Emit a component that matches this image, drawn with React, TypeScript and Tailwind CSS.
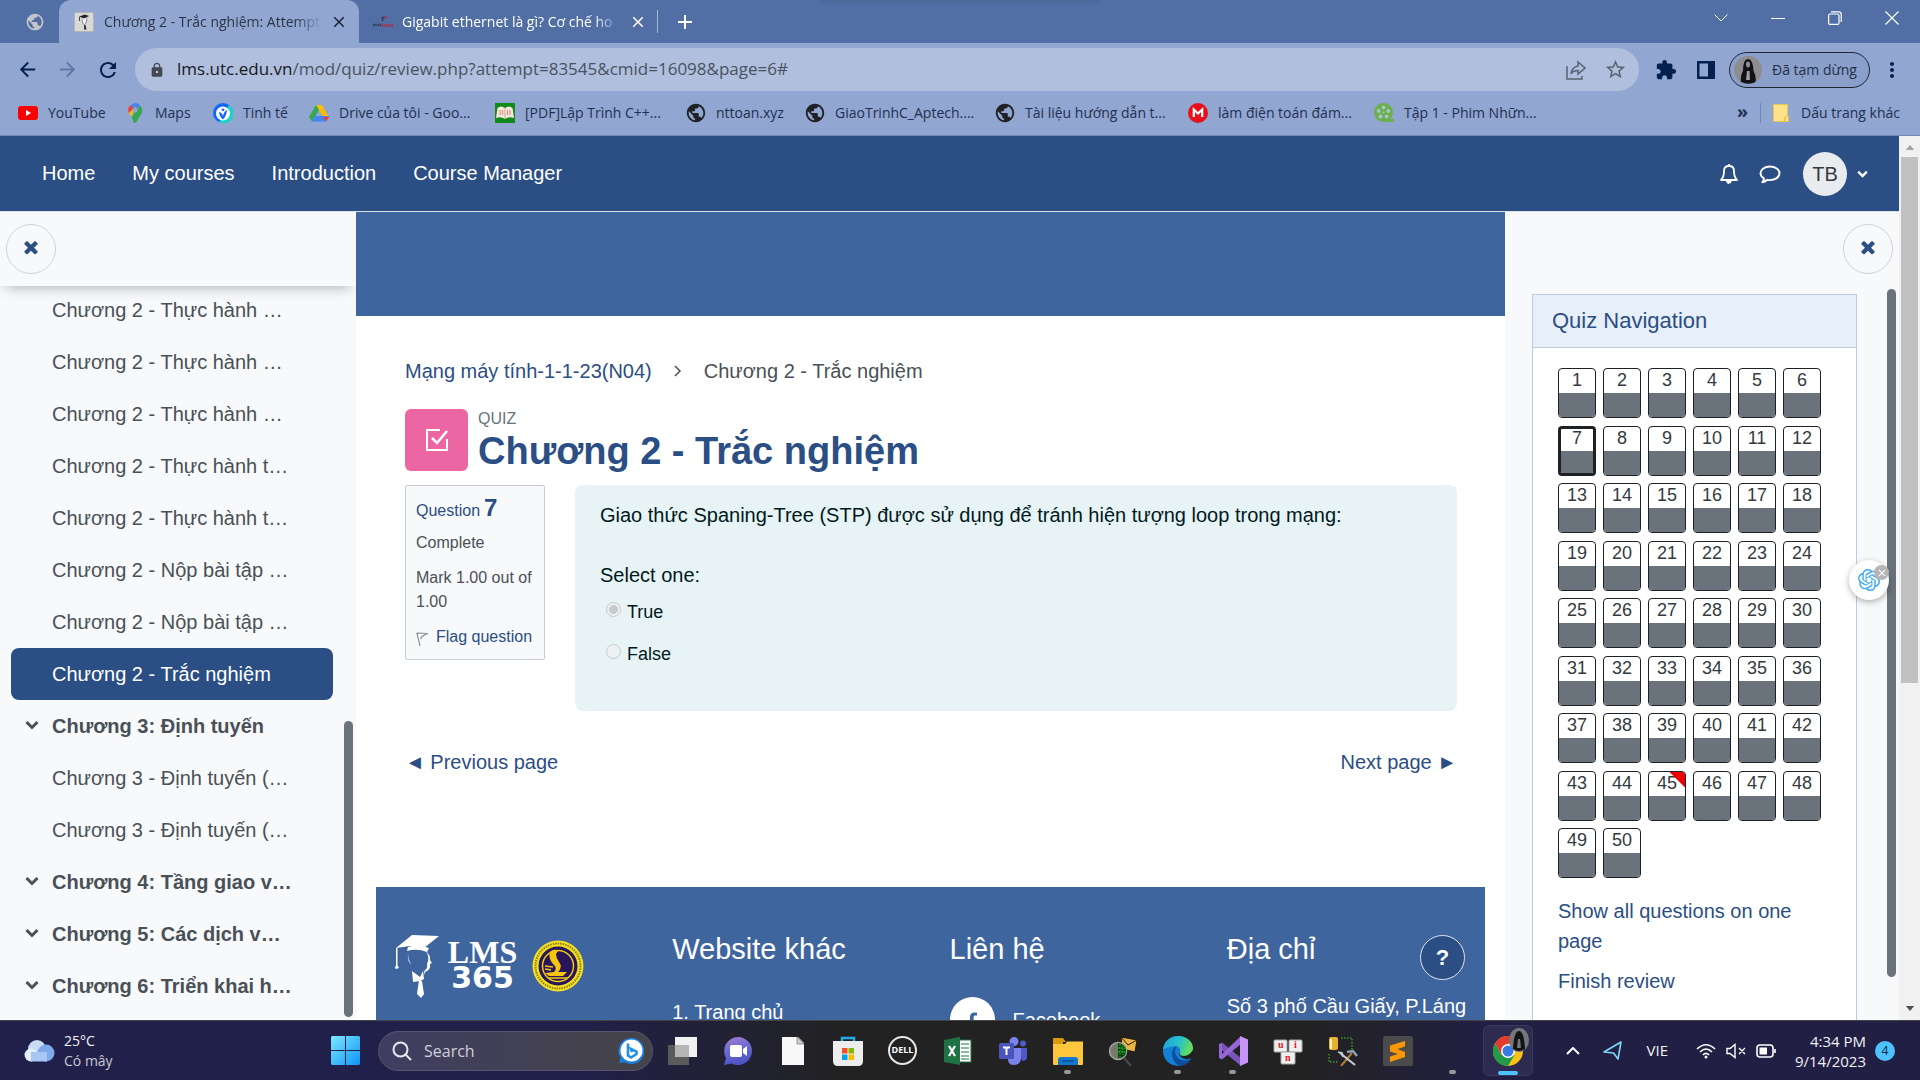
import React from "react";
import {
  MdArrowBack,
  MdArrowForward,
  MdRefresh,
  MdLock,
  MdStarBorder,
  MdExtension,
  MdMoreVert,
  MdPublic,
  MdAdd,
  MdClose,
} from "react-icons/md";
import { SiOpenai } from "react-icons/si";

/* ---------- shared glyphs ---------- */

function Cross({ className }: { className: string }) {
  return (
    <svg viewBox="0 0 1792 1792" className={className} fill="currentColor" aria-hidden="true">
      <path d="M1490 1322q0 40-28 68l-136 136q-28 28-68 28t-68-28l-294-294-294 294q-28 28-68 28t-68-28l-136-136q-28-28-28-68t28-68l294-294-294-294q-28-28-28-68t28-68l136-136q28-28 68-28t68 28l294 294 294-294q28-28 68-28t68 28l136 136q28 28 28 68t-28 68l-294 294 294 294q28 28 28 68z" />
    </svg>
  );
}

function Chevron({ className }: { className: string }) {
  return (
    <svg viewBox="0 0 14 10" className={className} fill="none" stroke="currentColor" strokeWidth="3" aria-hidden="true">
      <path d="M1.5 2 7 7.5 12.500 2" />
    </svg>
  );
}

function GradFavicon() {
  return (
    <svg viewBox="0 0 20 20" className="size-5 shrink-0" aria-hidden="true">
      <rect x="0.500" y="0.500" width="19" height="19" rx="1.500" fill="#d9d9d9" stroke="#b5b5b5" />
      <path d="M5 4.500 11 2.500 15 4 10 6.500z" fill="#222" />
      <path d="M5.500 5v4" stroke="#222" strokeWidth="0.800" />
      <path d="M8 7q0 5 2.500 6 2.500-2 2.500-7" fill="#eee" stroke="#666" strokeWidth="0.700" />
      <path d="M10 13h1.500l1 4.500h-2.500z" fill="#333" />
    </svg>
  );
}

function VietFavicon() {
  return (
    <svg viewBox="0 0 20 20" className="size-5 shrink-0" aria-hidden="true">
      <path d="M9.500 9V5.500h3" fill="none" stroke="#3b3357" strokeWidth="1.500" />
      <path d="M11 5.500h3" stroke="#c3263a" strokeWidth="1.500" />
      <path d="M0 13h9" stroke="#3b3a60" strokeWidth="2.500" strokeDasharray="1.500 0.700" />
      <path d="M9 13.500h11" stroke="#a8324c" strokeWidth="2.500" strokeDasharray="1.800 0.500" />
    </svg>
  );
}

/* ---------- bookmark icons ---------- */

const YoutubeIcon = () => (
  <svg viewBox="0 0 20 20" className="size-5">
    <rect y="3" width="20" height="14" rx="3" fill="#f00" />
    <path d="M8 7v6l5-3z" fill="#fff" />
  </svg>
);
const MapsIcon = () => (
  <svg viewBox="0 0 20 20" className="size-5">
    <path d="M10 0a7 7 0 0 1 5 2L8 10 4.600 7A7 7 0 0 1 10 0z" fill="#4285f4" />
    <path d="M5 2.200 3.400 5A6 6 0 0 0 4 10l5-5z" fill="#ea4335" />
    <path d="M4 10l8-8q-4 5-5 12z" fill="#fbbc04" />
    <path d="M15 2.500q4 4 1 9-3 4-4.500 7.500-1.500 2-3 0L6.500 14z" fill="#34a853" />
    <circle cx="10" cy="7" r="2.500" fill="#91a6d0" />
  </svg>
);
const TinhteIcon = () => (
  <svg viewBox="0 0 20 20" className="size-5">
    <circle cx="10" cy="10" r="10" fill="#1466f5" />
    <path d="M16 2a10 10 0 0 1-10 17.300z" fill="#19d3c5" />
    <circle cx="10" cy="10.500" r="7" fill="#fff" />
    <path d="M6 9q3.500.5 4 4.500.5-5 4-6.500-.5 6-4 9.500-3.500-3-4-7.500z" fill="#1466f5" />
    <circle cx="10" cy="6.800" r="1.400" fill="#1466f5" />
  </svg>
);
const DriveIcon = () => (
  <svg viewBox="0 0 20 20" className="size-5">
    <path d="M7 2h6l7 12h-6z" fill="#fbbc04" />
    <path d="M7 2 0 14l3 4.500L10 7z" fill="#34a853" />
    <path d="M3 18.500 6 13h14l-3 5.500z" fill="#4285f4" />
    <path d="M17 18.500 20 14h-6z" fill="#ea4335" />
  </svg>
);
const PdfIcon = () => (
  <svg viewBox="0 0 20 20" className="size-5">
    <rect width="20" height="20" fill="#118a1c" />
    <path d="M2.500 5q3.500-3 7.500 0 4-3 7.500 0l1.500 10q-5-2-9 1-4-3-9-1z" fill="#f6e7dc" />
    <path d="M5 7v5M7.500 7v5M12.500 7v5M15 7v5" stroke="#e0937f" strokeWidth="1.200" />
    <path d="M10 5v11" stroke="#b99" strokeWidth="0.800" />
  </svg>
);
const GlobeIcon = () => <MdPublic className="size-[22px] -m-px text-[#202124]" />;
const MegaIcon = () => (
  <svg viewBox="0 0 20 20" className="size-5">
    <circle cx="10" cy="10" r="10" fill="#e8101a" />
    <path d="M5.800 14V6.500L10 10.500l4.200-4V14" fill="none" stroke="#fff" strokeWidth="2.200" />
  </svg>
);
const FilmIcon = () => (
  <svg viewBox="0 0 20 20" className="size-5">
    <circle cx="9.500" cy="9.500" r="9.500" fill="#6ab04c" />
    <path d="M10 16h10v3H10z" fill="#6ab04c" />
    <g fill="#a9c3c9">
      <circle cx="9.500" cy="4.500" r="1.900" />
      <circle cx="4.700" cy="8" r="1.900" />
      <circle cx="14.300" cy="8" r="1.900" />
      <circle cx="6.500" cy="13.500" r="1.900" />
      <circle cx="12.500" cy="13.500" r="1.900" />
      <circle cx="9.500" cy="9.500" r="1" />
    </g>
  </svg>
);

const bookmarks: { label: string; icon: React.ReactNode; width: string }[] = [
  { label: "YouTube", icon: <YoutubeIcon />, width: "w-[107px]" },
  { label: "Maps", icon: <MapsIcon />, width: "w-[88px]" },
  { label: "Tinh tế", icon: <TinhteIcon />, width: "w-[96px]" },
  { label: "Drive của tôi - Goo...", icon: <DriveIcon />, width: "w-[186px]" },
  { label: "[PDF]Lập Trình C++...", icon: <PdfIcon />, width: "w-[191px]" },
  { label: "nttoan.xyz", icon: <GlobeIcon />, width: "w-[119px]" },
  { label: "GiaoTrinhC_Aptech....", icon: <GlobeIcon />, width: "w-[190px]" },
  { label: "Tài liệu hướng dẫn t...", icon: <GlobeIcon />, width: "w-[193px]" },
  { label: "làm điện toán đám...", icon: <MegaIcon />, width: "w-[186px]" },
  { label: "Tập 1 - Phim Nhữn...", icon: <FilmIcon />, width: "w-[180px]" },
];

/* ---------- browser chrome ---------- */

function TabStrip() {
  return (
    <div className="relative flex h-[43px] items-stretch bg-[#516fa5] text-white">
      <div className="absolute top-0 left-1/2 h-1 w-[280px] -translate-x-1/2 bg-[#4d6a9d]" />
      <button className="flex w-[59px] items-center justify-end rounded-br-xl pr-3.5" aria-label="Pinned tab">
        <MdPublic className="size-5 text-[#c3c5c8]" />
      </button>
      <div className="flex w-[300px] items-center rounded-t-xl bg-[#91a6d0] pr-[11px] pl-[15px] text-[#2c3547]">
        <GradFavicon />
        <span className="ml-2.5 w-[218px] overflow-hidden whitespace-nowrap [mask-image:linear-gradient(to_right,black_88%,transparent)]">
          Chương 2 - Trắc nghiệm: Attempt
        </span>
        <button aria-label="Close tab" className="ml-auto text-[#1a2233]">
          <MdClose className="size-[18px]" />
        </button>
      </div>
      <div className="flex w-[298px] items-center pr-2.5 pl-3.5">
        <VietFavicon />
        <span className="ml-[9px] w-[218px] overflow-hidden whitespace-nowrap [mask-image:linear-gradient(to_right,black_88%,transparent)]">
          Gigabit ethernet là gì? Cơ chế ho
        </span>
        <button aria-label="Close tab" className="ml-auto">
          <MdClose className="size-[18px]" />
        </button>
      </div>
      <div className="my-2.5 w-px bg-[#a9b8d6]" />
      <button aria-label="New tab" className="ml-[15px]">
        <MdAdd className="size-6" />
      </button>
      <div className="ml-auto flex items-start">
        <button aria-label="Search tabs" className="flex h-9 w-[57px] items-center justify-center">
          <svg viewBox="0 0 14 8" className="h-2 w-3.5" fill="none" stroke="#fff"><path d="m.5.500 6.500 6.500L13.500.500" /></svg>
        </button>
        <button aria-label="Minimize" className="flex h-9 w-[57px] items-center justify-center">
          <svg viewBox="0 0 14 14" className="size-3.5" stroke="#fff"><path d="M0 7.500h14" /></svg>
        </button>
        <button aria-label="Restore" className="flex h-9 w-[57px] items-center justify-center">
          <svg viewBox="0 0 14 14" className="size-3.5" fill="none" stroke="#fff" strokeWidth="1.200">
            <rect x="0.600" y="3" width="10.400" height="10.400" rx="1.500" />
            <path d="M3 .8h7.500a2.500 2.500 0 0 1 2.700 2.700V11" />
          </svg>
        </button>
        <button aria-label="Close window" className="flex h-9 w-[57px] items-center justify-center">
          <svg viewBox="0 0 14 14" className="size-3.5" stroke="#fff" strokeWidth="1.200"><path d="m.5.500 13 13m0-13-13 13" /></svg>
        </button>
      </div>
    </div>
  );
}

function Toolbar() {
  return (
    <div className="flex h-[53px] items-center bg-[#91a6d0] text-[#03204e]">
      <button aria-label="Back" className="ml-4"><MdArrowBack className="size-[23px]" /></button>
      <button aria-label="Forward" className="ml-[17px] text-[#5f78a8]"><MdArrowForward className="size-[23px]" /></button>
      <button aria-label="Reload" className="ml-[17px]"><MdRefresh className="size-6" /></button>
      <div className="ml-[15px] flex h-[43px] flex-1 items-center rounded-full bg-[#afbfdd] pr-3 pl-3.5">
        <MdLock className="size-4 shrink-0 text-[#45484f]" />
        <div className="ml-3 flex-1 text-[17px] whitespace-nowrap text-[#4a5261]">
          <span className="text-[#17191d]">lms.utc.edu.vn</span>/mod/quiz/review.php?attempt=83545&amp;cmid=16098&amp;page=6#
        </div>
        <button aria-label="Share" className="text-[#5a6372]">
          <svg viewBox="0 0 20 20" className="size-5" fill="none" stroke="currentColor" strokeWidth="1.500">
            <path d="M1 6v13h15v-3" />
            <path d="M12 2l7 6-7 6v-3.500q-5 0-7 3.500 1-7 7-8z" />
          </svg>
        </button>
        <button aria-label="Bookmark this page" className="ml-[18px] text-[#5a6372]"><MdStarBorder className="size-[23px]" /></button>
      </div>
      <button aria-label="Extensions" className="ml-4"><MdExtension className="size-[22px]" /></button>
      <button aria-label="Side panel" className="ml-5">
        <svg viewBox="0 0 18 18" className="size-[18px]"><path d="M0 0h18v18H0zm2.500 2.500v13H11v-13z" fill="currentColor" fillRule="evenodd" /></svg>
      </button>
      <button className="ml-3.5 flex h-9 w-[141px] items-center rounded-full border border-[#1d2635] bg-[#8a9fc9] pl-1 text-sm text-[#22304a]">
        <svg viewBox="0 0 28 28" className="size-7 shrink-0">
          <circle cx="14" cy="14" r="14" fill="#8d8d90" />
          <path d="M7 26q-1-6 2-11 0-12 5-12t5.500 12q3 5 2 11-7 3.500-14.500 0z" fill="#121214" />
          <ellipse cx="14" cy="8.500" rx="2" ry="3" fill="#8f8f92" />
          <path d="M13 15h2.500l.5 9h-4z" fill="#9c9ca0" />
        </svg>
        <span className="ml-2.5 whitespace-nowrap">Đã tạm dừng</span>
      </button>
      <button aria-label="Menu" className="mr-4 ml-2.5"><MdMoreVert className="size-6" /></button>
    </div>
  );
}

function BookmarkBar() {
  return (
    <div className="flex h-10 items-center border-b border-[#6f88b8] bg-[#91a6d0] pb-1.5 pl-[18px] text-[#1f3052]">
      {bookmarks.map((b) => (
        <a key={b.label} href="#" className={`flex shrink-0 items-center gap-2.5 ${b.width}`}>
          <span className="shrink-0">{b.icon}</span>
          <span className="whitespace-nowrap">{b.label}</span>
        </a>
      ))}
      <button aria-label="More bookmarks" className="ml-auto pb-1 text-lg leading-none font-bold">»</button>
      <div className="mx-3 h-5 w-px bg-[#6f88b8]" />
      <a href="#" className="flex items-center gap-3 pr-5 whitespace-nowrap">
        <svg viewBox="0 0 16 20" className="h-5 w-4">
          <path d="M.5 1.500h14v12h1v5H.500z" fill="#ffe28a" stroke="#e9c455" />
          <path d="M12 18.500v-3.500q0-1.500 1.500-1.500" fill="none" stroke="#dcae2b" />
        </svg>
        Dấu trang khác
      </a>
    </div>
  );
}

/* ---------- page ---------- */

function SiteHeader() {
  return (
    <header className="flex h-[76px] shrink-0 items-center border-b border-[#dee2e6] bg-[#2b4e84] pr-[31px] pl-[42px] text-xl text-white">
      <nav className="flex gap-[37px] pb-0.5">
        <a href="#">Home</a>
        <a href="#">My courses</a>
        <a href="#">Introduction</a>
        <a href="#">Course Manager</a>
      </nav>
      <div className="ml-auto flex items-center">
        <button aria-label="Notifications">
          <svg viewBox="0 0 20 22" className="h-[22px] w-5" fill="none" stroke="currentColor" strokeWidth="1.800">
            <path d="M2 17q3-3 3-9 0-5 5-5t5 5q0 6 3 9z" strokeLinejoin="round" />
            <path d="M10 1v2" />
            <path d="M7.500 18a2.500 2.500 0 0 0 5 0z" fill="currentColor" stroke="none" />
            <path d="M8 18q0 2 2 2.500" strokeWidth="1.500" />
          </svg>
        </button>
        <button aria-label="Messages" className="ml-5">
          <svg viewBox="0 0 22 20" className="h-5 w-[22px]" fill="none" stroke="currentColor" strokeWidth="1.900">
            <path d="M11 2.500c5.300 0 9.500 3 9.500 6.800s-4.200 6.800-9.500 6.800q-1.500 0-2.700-.3-2.300 2.200-5 2.400 1.600-1.600 1.700-3.800C2.900 13.200 1.500 11.400 1.500 9.300c0-3.800 4.200-6.800 9.500-6.800z" strokeLinejoin="round" />
          </svg>
        </button>
        <button className="ml-[22px] flex items-center gap-2.5">
          <span className="flex size-11 items-center justify-center rounded-full bg-[#e9ecef] text-[#343a40]">TB</span>
          <Chevron className="h-2 w-[11px]" />
        </button>
      </div>
    </header>
  );
}

const courseIndex: { label: string; section?: boolean; active?: boolean }[] = [
  { label: "Chương 2 - Thực hành …" },
  { label: "Chương 2 - Thực hành …" },
  { label: "Chương 2 - Thực hành …" },
  { label: "Chương 2 - Thực hành t…" },
  { label: "Chương 2 - Thực hành t…" },
  { label: "Chương 2 - Nộp bài tập …" },
  { label: "Chương 2 - Nộp bài tập …" },
  { label: "Chương 2 - Trắc nghiệm", active: true },
  { label: "Chương 3: Định tuyến", section: true },
  { label: "Chương 3 - Định tuyến (…" },
  { label: "Chương 3 - Định tuyến (…" },
  { label: "Chương 4: Tầng giao v…", section: true },
  { label: "Chương 5: Các dịch v…", section: true },
  { label: "Chương 6: Triển khai h…", section: true },
];

function RoundClose({ label }: { label: string }) {
  return (
    <button
      aria-label={label}
      className="flex size-[50px] items-center justify-center rounded-full border border-[#cfd3d8] pb-1 text-[#2b4e84]"
    >
      <Cross className="size-5" />
    </button>
  );
}

function CourseDrawer() {
  return (
    <aside className="relative flex w-[356px] shrink-0 flex-col overflow-hidden bg-[#f8f9fb]">
      <div className="relative z-10 h-[74px] shrink-0 bg-[#f8f9fb] pt-3 pl-1.5 shadow-[0_8px_12px_-6px_rgba(0,0,0,0.28)]">
        <RoundClose label="Close course index" />
      </div>
      <ul className="-mt-0.5 text-xl text-[#495057]">
        {courseIndex.map((item, i) => (
          <li
            key={i}
            className={
              item.active
                ? "mr-[23px] ml-[11px] flex h-[52px] items-center rounded-lg bg-[#2b4e84] text-white"
                : "mr-[23px] ml-[11px] flex h-[52px] items-center"
            }
          >
            <span className="flex w-[41px] justify-center pb-0.5">{item.section && <Chevron className="h-2.5 w-3.5" />}</span>
            <a href="#" className={item.section ? "font-bold whitespace-nowrap" : "whitespace-nowrap"}>
              {item.label}
            </a>
          </li>
        ))}
      </ul>
      <div className="absolute right-[3px] bottom-[3px] h-[296px] w-[9px] rounded-full bg-[#6a737b]" />
    </aside>
  );
}

function QuestionInfo() {
  return (
    <div className="h-[175px] w-[140px] shrink-0 rounded-xs border border-[#c5ccd5] bg-[#f8f9fb] px-2.5 pt-2.5 text-base leading-6 text-[#495057]">
      <h3 className="flex h-7 items-baseline gap-1 text-[#2b4e84]">
        Question <span className="text-2xl leading-6 font-bold">7</span>
      </h3>
      <div className="mt-[7px]">Complete</div>
      <div className="mt-[11px]">Mark 1.00 out of 1.00</div>
      <a href="#" className="mt-[11px] flex items-center gap-2 whitespace-nowrap text-[#2b4e84]">
        <svg viewBox="0 0 12 14" className="mt-1 h-3.5 w-3" fill="none" stroke="#868e96" strokeWidth="1.200">
          <path d="M.8.800 4 14M.8 1l10.500.5L6 4.500 4.500 7" />
        </svg>
        Flag question
      </a>
    </div>
  );
}

function Answer({ id, label, checked }: { id: string; label: string; checked?: boolean }) {
  return (
    <div className="flex h-[27px] items-start pl-1.5">
      <input
        id={id}
        type="radio"
        name="answer"
        disabled
        defaultChecked={checked}
        className="mt-[3px] size-[15px] appearance-none rounded-full border-[1px] border-[#c6cbcc] bg-[#eef1f2] checked:bg-[radial-gradient(circle,#c6cbcc_0_4px,#eef1f2_5px)]"
      />
      <label htmlFor={id} className="ml-1.5 text-lg leading-[27px]">{label}</label>
    </div>
  );
}

function LmsLogo() {
  return (
    <a href="#" className="flex items-start" aria-label="LMS 365">
      <svg viewBox="0 0 44 64" className="h-16 w-11 shrink-0" fill="#fff">
        <path d="M1 14 17 1l27 1-15 12-14-2z" />
        <path d="M13 13q10-3 21 1l-2 4Q22 14 12 17z" />
        <path d="M1 14h1.500v17L4 34l-3 1-1-1 1-3z" />
        <path d="M31 17q5 5 4 9l2 3-2 1q1 6-5 8l-1 3q-1-3 1-5 3-2 2-6l1-3q1-5-2-10z" />
        <path d="M13 19q0 8 4 12-5-3-4-12z" />
        <path d="m17 37 8 6 3-6 1 8-4 2-7 1z" />
        <path d="m24 46 3 1 2 13-3 4-4-4z" />
      </svg>
      <div className="ml-2 flex w-[71px] flex-col items-center text-white">
        <span className="font-['Liberation_Serif',serif] text-[32px] leading-[36px] font-bold">LMS</span>
        <span className="-mt-1 font-['DejaVu_Sans',sans-serif] text-[30px] leading-[24px] font-bold">365</span>
      </div>
      <svg viewBox="0 0 52 52" className="mt-1.5 ml-3.5 size-[52px] shrink-0">
        <circle cx="26" cy="26" r="25.500" fill="#f7e11e" />
        <circle cx="26" cy="26" r="22.500" fill="none" stroke="#8a7d1c" strokeWidth="2" strokeDasharray="1.500 1" />
        <circle cx="26" cy="26" r="19.500" fill="#28165c" />
        <circle cx="26" cy="26" r="15.500" fill="none" stroke="#f2c90d" strokeWidth="1.500" />
        <path d="M18 12q4-4 8-1l-2 3q0 4 3 8 4 5-1 10h9l-4 4H17l-4-3 9-1q4-4-1-8-5-6-3-12z" fill="#f5c60a" />
        <path d="M13 26l8 1M13 29l6 1M16 38h20" stroke="#f5c60a" strokeWidth="1.500" />
      </svg>
    </a>
  );
}

function SiteFooter() {
  return (
    <footer className="mx-5 grid h-[520px] shrink-0 grid-cols-4 bg-[#3f659f] text-xl leading-[30px] text-white">
      <div className="px-[19px] pt-[47px]">
        <LmsLogo />
      </div>
      <div className="px-[19px] pt-[45px]">
        <h3 className="text-[29px] leading-[34px]">Website khác</h3>
        <a href="#" className="mt-[31px] block">1. Trang chủ</a>
      </div>
      <div className="px-[19px] pt-[45px]">
        <h3 className="text-[29px] leading-[34px]">Liên hệ</h3>
        <a href="#" className="mt-[31px] flex items-center gap-[18px]">
          <span className="flex size-[45px] items-center justify-center rounded-full bg-white text-[#3f659f]">
            <svg viewBox="0 0 12 24" className="mt-1 h-5 w-3" fill="currentColor">
              <path d="M3.500 24V13.500H0V9.500h3.500V6C3.500 2.500 5.500.500 9 .500q2 0 3 .3v3.500h-2c-1.500 0-2 .8-2 2v3.200h4l-.6 4H8V24z" />
            </svg>
          </span>
          Facebook
        </a>
      </div>
      <div className="px-[19px] pt-[45px]">
        <h3 className="text-[29px] leading-[34px]">Địa chỉ</h3>
        <p className="mt-[25px] whitespace-nowrap">Số 3 phố Cầu Giấy, P.Láng</p>
      </div>
    </footer>
  );
}

function MainColumn() {
  return (
    <main className="relative flex min-w-0 flex-1 flex-col overflow-hidden bg-white">
      <div className="h-[104px] shrink-0 bg-[#3f659f]" />
      <div className="shrink-0 px-12 pt-10 pl-[49px]">
        <nav aria-label="Breadcrumb" className="flex items-center text-xl leading-[30px] text-[#495057]">
          <a href="#" className="text-[#2b4e84]">Mạng máy tính-1-1-23(N04)</a>
          <svg viewBox="0 0 8 12" className="mx-[22px] h-3 w-2" fill="none" stroke="#495057" strokeWidth="1.500"><path d="m1 1 5 5-5 5" /></svg>
          <span>Chương 2 - Trắc nghiệm</span>
        </nav>
        <div className="mt-[23px] flex h-[62px]">
          <div className="flex w-[63px] items-center justify-center rounded-md bg-[#eb66a2]">
            <svg viewBox="0 0 24 24" className="size-6" fill="none" stroke="#fff" strokeWidth="2">
              <path d="M15 2H2v20h20V11" />
              <path d="m7 10 5 5L22 3" strokeWidth="2.500" />
            </svg>
          </div>
          <div className="ml-2.5">
            <div className="text-base leading-5 text-[#6a737b]">QUIZ</div>
            <h1 className="text-[38px] leading-[44px] font-bold text-[#2b4e84]">Chương 2 - Trắc nghiệm</h1>
          </div>
        </div>
        <div className="mt-3.5 flex items-start">
          <QuestionInfo />
          <form className="ml-[30px] flex-1 rounded-lg bg-[#e7f3f5] px-[25px] pt-[15px] pb-[43px] text-xl leading-[30px] text-[#001a1e]">
            <p>Giao thức Spaning-Tree (STP) được sử dụng để tránh hiện tượng loop trong mạng:</p>
            <p className="mt-[30px] mb-[9px]">Select one:</p>
            <div className="flex flex-col gap-[15px]">
              <Answer id="answer-true" label="True" checked />
              <Answer id="answer-false" label="False" />
            </div>
          </form>
        </div>
        <div className="mt-9 flex justify-between text-xl leading-[30px] text-[#2b4e84]">
          <a href="#">◄ Previous page</a>
          <a href="#">Next page ►</a>
        </div>
      </div>
      <div className="h-[110px] shrink-0" />
      <SiteFooter />
      <button
        aria-label="Help"
        className="absolute right-10 bottom-10 flex size-[45px] items-center justify-center rounded-full border border-[#dfe5ee] bg-[#2b4e84] text-[22px] font-bold text-white"
      >
        ?
      </button>
    </main>
  );
}

const questionNumbers = Array.from({ length: 50 }, (_, i) => i + 1);

function QuizDrawer() {
  return (
    <aside className="relative w-[394px] shrink-0 overflow-hidden bg-[#f8f9fb]">
      <div className="flex justify-end pt-3 pr-1.5">
        <RoundClose label="Close block drawer" />
      </div>
      <section className="mt-5 mr-[42px] ml-[27px] h-[900px] border border-[#bccbe0] bg-white">
        <h2 className="h-[53px] border-b border-[#bccbe0] bg-[#e7effb] pl-[19px] text-[22px] leading-[52px] text-[#2b4e84]">
          Quiz Navigation
        </h2>
        <div className="px-[25px] pt-5">
          <div className="grid h-[510px] w-[263px] grid-cols-[repeat(6,38px)] content-between justify-between text-lg text-[#343a40]">
            {questionNumbers.map((n) => (
              <a
                key={n}
                href="#"
                className={
                  n === 7
                    ? "relative flex h-[50px] flex-col overflow-hidden rounded border-[3px] border-[#1d2125] bg-white text-center leading-[19px]"
                    : "relative flex h-[50px] flex-col overflow-hidden rounded border border-[#1d2125] bg-white text-center leading-[23px]"
                }
              >
                <span className="h-1/2">{n}</span>
                <span className="h-1/2 bg-[#6a737b]" />
                {n === 45 && (
                  <span className="absolute top-0 right-0 size-4 bg-[#f00000] [clip-path:polygon(0_0,100%_0,100%_100%)]" />
                )}
              </a>
            ))}
          </div>
          <div className="mt-[18px] text-xl leading-[30px] text-[#2b4e84]">
            <a href="#" className="block">Show all questions on one page</a>
            <a href="#" className="mt-2.5 block">Finish review</a>
          </div>
        </div>
      </section>
      <div className="absolute top-[77px] right-[3px] h-[688px] w-[9px] rounded-full bg-[#6a737b]" />
      <button
        aria-label="Assistant"
        className="absolute top-[348px] right-2.5 flex size-10 items-center justify-center rounded-full bg-white text-[#3fa9f5] shadow-[0_2px_6px_rgba(0,0,0,0.3)]"
      >
        <SiOpenai className="size-[22px]" />
        <span className="absolute top-[5px] right-0 flex size-[15px] items-center justify-center rounded-full bg-[#b5b5b5] text-white">
          <MdClose className="size-3" />
        </span>
      </button>
    </aside>
  );
}

function PageScrollbar() {
  return (
    <div className="flex w-[21px] shrink-0 flex-col items-center bg-[#f1f1f1]">
      <svg viewBox="0 0 10 6" className="mt-[9px] h-[5px] w-2.5" fill="#a3a3a3"><path d="M5 0l5 6H0z" /></svg>
      <div className="mt-[7px] h-[526px] w-[17px] bg-[#c1c1c1]" />
      <svg viewBox="0 0 10 6" className="mt-auto mb-[9px] h-[5px] w-2.5" fill="#505050"><path d="M0 0h10L5 6z" /></svg>
    </div>
  );
}

/* ---------- taskbar ---------- */

const iconClass = "size-[30px]";

const taskIcons: { name: string; art: React.ReactNode; running?: boolean }[] = [
  {
    name: "Task view",
    art: (
      <svg viewBox="0 0 30 30" className={iconClass}>
        <rect x="7" y="1" width="22" height="20" fill="#f1f1f1" />
        <rect x="0" y="9" width="21" height="20" fill="#5b5b5b" />
        <rect x="7" y="9" width="14" height="12" fill="#b5b5b5" />
      </svg>
    ),
  },
  {
    name: "Chat",
    art: (
      <svg viewBox="0 0 30 30" className={iconClass}>
        <defs>
          <linearGradient id="chat" x1="0" y1="0" x2="0.300" y2="1"><stop stopColor="#a77fd0" /><stop offset="0.500" stopColor="#6d6bd2" /><stop offset="1" stopColor="#4d54c6" /></linearGradient>
        </defs>
        <path d="M15 1a14 14 0 1 1-6.500 26.400L1 29l2-7A14 14 0 0 1 15 1z" fill="url(#chat)" />
        <rect x="7" y="9" width="12" height="12" rx="2" fill="#fff" />
        <path d="m20 13 4-3v10l-4-3z" fill="#fff" />
      </svg>
    ),
  },
  {
    name: "Document",
    art: (
      <svg viewBox="0 0 30 30" className={iconClass}>
        <path d="M4 1h16l6 6v22H4z" fill="#f8f8f8" />
        <path d="M19 1v7h7z" fill="#d0d0d0" stroke="#777" strokeWidth="0.700" />
      </svg>
    ),
  },
  {
    name: "Microsoft Store",
    art: (
      <svg viewBox="0 0 30 30" className={iconClass}>
        <path d="M9 8V2h12v6" fill="none" stroke="#29a9e8" strokeWidth="2.500" />
        <path d="M0 5h30v20q0 5-5 5H5q-5 0-5-5z" fill="#ededed" />
        <path d="M9 12h5.500v5.500H9z" fill="#f25022" /><path d="M15.500 12H21v5.500h-5.500z" fill="#7fba00" />
        <path d="M9 18.500h5.500V24H9z" fill="#00a4ef" /><path d="M15.500 18.500H21V24h-5.500z" fill="#ffb900" />
      </svg>
    ),
  },
  {
    name: "Dell",
    art: (
      <span className="flex size-[29px] items-center justify-center rounded-full border-2 border-[#e6e6e6] text-[9px] font-bold text-white">
        DELL
      </span>
    ),
  },
  {
    name: "Excel",
    art: (
      <svg viewBox="0 0 30 30" className={iconClass}>
        <rect x="14" y="4" width="14" height="22" fill="#fff" stroke="#217346" />
        <path d="M18 8h8M18 12h8M18 16h8M18 20h8M18 23h8" stroke="#217346" strokeWidth="1.200" />
        <path d="m1 4 16-3v28L1 26z" fill="#1f7244" />
        <path d="m6 10 6 10M12 10 6 20" stroke="#fff" strokeWidth="2.200" />
      </svg>
    ),
  },
  {
    name: "Teams",
    art: (
      <svg viewBox="0 0 30 30" className={iconClass}>
        <circle cx="25" cy="7.500" r="3" fill="#5059c9" /><circle cx="16" cy="5.500" r="4.500" fill="#7b83eb" />
        <path d="M21 12h8v9q0 4-5 4z" fill="#5059c9" />
        <path d="M10 12h13v11q-1 6-7 6t-6-6z" fill="#7b83eb" />
        <rect x="1" y="7" width="15" height="16" rx="1.500" fill="#4b53bc" />
        <path d="M5 11.500h7M8.500 11v8" stroke="#fff" strokeWidth="2" />
      </svg>
    ),
  },
  {
    name: "File Explorer",
    running: true,
    art: (
      <svg viewBox="0 0 30 30" className={iconClass}>
        <path d="M0 3q0-1 1-1h9l3 4h-3v6H0z" fill="#dc9a08" />
        <path d="M0 8h12l2-2.500h16V28q0 1-1 1H1q-1 0-1-1z" fill="#fdc73c" />
        <path d="M5 29v-5q0-3 3-3h14q3 0 3 3v5z" fill="#1377d1" /><path d="M9 25h12" stroke="#0b4c93" strokeWidth="1.500" />
      </svg>
    ),
  },
  {
    name: "Mail search",
    art: (
      <svg viewBox="0 0 30 30" className={iconClass}>
        <path d="m13 1 16 3-2 12-13-3z" fill="#e9b544" stroke="#241b08" /><path d="m13 1 7 8 9-5" fill="none" stroke="#241b08" />
        <circle cx="10" cy="15" r="8.500" fill="#77796f" stroke="#a3a3a0" strokeWidth="1.500" />
        <path d="M10 7q8 1 8 8t-8 7z" fill="#073d0c" /><path d="M12 8v13M15 9v10M10 12h8M10 16h8" stroke="#16d42b" strokeWidth="0.900" strokeDasharray="2 1" />
        <path d="m16 22 7 8" stroke="#4c4c4c" strokeWidth="2" />
      </svg>
    ),
  },
  {
    name: "Edge",
    running: true,
    art: (
      <svg viewBox="0 0 30 30" className={iconClass}>
        <defs>
          <linearGradient id="edge" x1="0" y1="0" x2="1" y2="0.300"><stop stopColor="#1d9fe0" /><stop offset="0.600" stopColor="#2bc3c8" /><stop offset="1" stopColor="#62dc5c" /></linearGradient>
        </defs>
        <circle cx="15" cy="15" r="15" fill="#1380d3" />
        <path d="M0 13C1 5 8 0 15 0c9 0 15 6 15 12 0 5-4 8-9 8-4 0-5-2-4-4 1-3-1-6-5-6-6 0-12 4-12 3z" fill="url(#edge)" />
        <path d="M9 17q0-5 5-7-4 6 0 11 5 6 14 2-4 7-12 7-7-4-7-13z" fill="#0c4f9c" />
        <path d="M17 16q-2 4 4 4 5 0 9-6l.5 7-3 1.500q-6 2-10-2-3-3-.5-4.500z" fill="#212123" />
      </svg>
    ),
  },
  {
    name: "Visual Studio",
    running: true,
    art: (
      <svg viewBox="0 0 30 30" className={iconClass}>
        <path d="m1 8 3-1.500L23 22v8L1 12z" fill="#7a55b8" /><path d="M1 8v14l3 1.500L23 8V0L4 18V8z" fill="#9566d6" />
        <path d="m22 0 8 3.500v23L22 30z" fill="#c795f7" />
      </svg>
    ),
  },
  {
    name: "UniKey",
    art: (
      <svg viewBox="0 0 30 30" className={iconClass}>
        <g fill="#eee" stroke="#a9a9a9"><rect x="1" y="4" width="13" height="12" rx="1" /><rect x="16" y="4" width="13" height="12" rx="1" /><rect x="8" y="16" width="14" height="12" rx="1" /></g>
        <g fill="#e0202a" fontFamily="Liberation Serif" fontWeight="bold" fontSize="10"><text x="5" y="12">u</text><text x="21" y="12">i</text><text x="12" y="25">n</text></g>
      </svg>
    ),
  },
  {
    name: "SQL tools",
    art: (
      <svg viewBox="0 0 30 30" className={iconClass}>
        <rect x="1" y="1" width="9" height="13" rx="2" fill="#e4b130" /><path d="M3 3v10" stroke="#fff2b0" strokeWidth="2" />
        <path d="M13 2h11v12M1 18v8h10" fill="none" stroke="#3b9b2b" strokeWidth="1.500" strokeDasharray="1.500 1.500" />
        <path d="m13 30 11-13" stroke="#b97d2b" strokeWidth="2" /><path d="m12 17 15 12" stroke="#c4cbd6" strokeWidth="2.200" />
        <path d="m19 16 6-1 4 5" fill="none" stroke="#8fa0b6" strokeWidth="2.500" />
        <path d="m10 16 4 1 1 4" fill="none" stroke="#c4cbd6" strokeWidth="1.800" />
      </svg>
    ),
  },
  {
    name: "Sublime Text",
    art: (
      <svg viewBox="0 0 30 30" className={iconClass}>
        <rect width="30" height="30" rx="2" fill="#4b4b4b" />
        <path d="M7 9.500 22 5v5.500l-7.500 2.500 7.500 3V21L7 26v-5.500l8-2.500-8-2.500z" fill="#ff9800" />
      </svg>
    ),
  },
  { name: "Running app", running: true, art: <span className={iconClass} /> },
];

function Taskbar() {
  return (
    <footer className="flex h-[60px] shrink-0 items-center border-t border-[#444449] bg-[linear-gradient(to_right,#21204a_0%,#21204a_30%,#222222_44%,#222222_68%,#221f45_78%,#221f45_100%)] text-[#f2f2f5]">
      <button className="flex w-[319px] items-center pl-6 text-left leading-5">
        <svg viewBox="0 0 32 22" className="h-[22px] w-8 shrink-0">
          <circle cx="13" cy="9" r="9" fill="#c9dcf7" /><circle cx="22" cy="13" r="8.500" fill="#7ea9ea" /><circle cx="7" cy="15" r="6.500" fill="#e4eefc" />
          <path d="M7 12h16v9.500H7z" fill="#a9c7f3" />
        </svg>
        <span className="ml-2">
          <span className="block">25°C</span>
          <span className="block text-[#c9c9d3]">Có mây</span>
        </span>
      </button>
      <button aria-label="Start" className="ml-3">
        <svg viewBox="0 0 29 29" className="size-[29px]">
          <defs>
            <linearGradient id="win" x1="0" y1="0" x2="1" y2="1"><stop stopColor="#7ce8ff" /><stop offset="1" stopColor="#0f93f7" /></linearGradient>
          </defs>
          <path d="M1 0h13v14H0V1zM15 0h13l1 1v13H15zM0 15h14v14H1l-1-1zM15 15h14v13l-1 1H15z" fill="url(#win)" />
        </svg>
      </button>
      <div className="ml-[18px] flex h-10 w-[275px] items-center rounded-full border border-[#56546f] bg-[linear-gradient(to_right,#403d62,#454448)] pr-2 pl-[13px]">
        <svg viewBox="0 0 20 20" className="size-5 shrink-0" fill="none" stroke="#e8e8ee" strokeWidth="2"><circle cx="8.500" cy="8.500" r="7" /><path d="m13.500 13.500 5.500 5.500" /></svg>
        <input aria-label="Search" placeholder="Search" className="ml-3 w-full min-w-0 bg-transparent text-base placeholder:text-[#cfcfd8]" />
        <svg viewBox="0 0 26 26" className="size-[26px] shrink-0">
          <path d="M13 0a13 13 0 1 1-6 24.300L1 25l1.500-5A13 13 0 0 1 13 0z" fill="#1b7fe0" />
          <circle cx="13.500" cy="12.500" r="11" fill="#fff" />
          <path d="M10 5.500v12l3 2 5.500-3.500v-2.500L13 11l1 3" fill="none" stroke="#2190e6" strokeWidth="2.600" />
        </svg>
      </div>
      <div className="ml-0.5 flex h-full">
        {taskIcons.map((t) => (
          <button key={t.name} aria-label={t.name} className="relative flex w-[55px] items-center justify-center">
            {t.art}
            {t.running && <span className="absolute bottom-1.5 left-6 h-1 w-[7px] rounded-full bg-[#98989c]" />}
          </button>
        ))}
        <button aria-label="Chrome" className="relative my-1 ml-[3px] flex w-[50px] items-center justify-center rounded-md border border-[#3b385d] bg-[#2e2b50]">
          <svg viewBox="0 0 30 30" className={iconClass}>
            <circle cx="15" cy="15" r="15" fill="#fbc116" />
            <path d="M2 7.500A15 15 0 0 1 28 7.500H15L8.500 19z" fill="#e33b2e" />
            <path d="M2 7.500A15 15 0 0 0 15 30l6.500-11H8.500z" fill="#229a4a" />
            <circle cx="15" cy="15" r="7" fill="#fff" /><circle cx="15" cy="15" r="5.500" fill="#3b79e7" />
          </svg>
          <svg viewBox="0 0 20 24" className="absolute top-0.5 right-[3px] h-6 w-5">
            <ellipse cx="10" cy="12" rx="10" ry="12" fill="#77777a" /><path d="M4 21Q5 3 10 3t6 18q-6 4-12 0z" fill="#141416" /><path d="M9 11h2l1 9H8z" fill="#77777a" />
          </svg>
          <span className="absolute bottom-0 h-1 w-5 rounded-full bg-[#4cc2ff]" />
        </button>
      </div>
      <div className="ml-auto flex items-center pr-[25px]">
        <button aria-label="Show hidden icons">
          <svg viewBox="0 0 14 8" className="h-2 w-3.5" fill="none" stroke="#fff" strokeWidth="2"><path d="m1 7 6-6 6 6" /></svg>
        </button>
        <svg viewBox="0 0 20 20" className="ml-[23px] size-5" fill="none" stroke="#7fd6f5" strokeWidth="1.600"><path d="M1 11 18 1l-3 17-4.500-6z" strokeLinejoin="round" /></svg>
        <span className="ml-6 text-[15px]">VIE</span>
        <svg viewBox="0 0 20 16" className="ml-7 h-4 w-5" fill="none" stroke="#fff" strokeWidth="1.600">
          <path d="M1 6q9-8.500 18 0M4 9q6-6 12 0M6.800 12q3.200-3.200 6.400 0" /><circle cx="10" cy="14" r="1.500" fill="#fff" stroke="none" />
        </svg>
        <svg viewBox="0 0 20 16" className="ml-2.5 h-4 w-5" fill="none" stroke="#fff" strokeWidth="1.400"><path d="M1 5.500v5h3l5 4v-13l-5 4zM13 5l6 6m0-6-6 6" /></svg>
        <svg viewBox="0 0 20 14" className="ml-2.5 h-3.5 w-5" fill="none" stroke="#fff" strokeWidth="1.600">
          <rect x="1" y="1" width="16" height="12" rx="3" /><rect x="3.500" y="3.500" width="7.500" height="7" fill="#fff" stroke="none" /><path d="M19 5v4" />
        </svg>
        <div className="ml-[18px] flex w-[72px] flex-col items-end text-[15px] leading-5 whitespace-nowrap">
          <div>4:34 PM</div>
          <div>9/14/2023</div>
        </div>
        <span className="ml-[9px] flex size-5 items-center justify-center rounded-full bg-[#4cc2ff] text-xs text-[#10243c]">4</span>
      </div>
    </footer>
  );
}

export default function App() {
  return (
    <div className="flex h-screen w-full flex-col overflow-hidden font-['Liberation_Sans',sans-serif]">
      <div className="shrink-0 font-['Open_Sans',sans-serif] text-sm">
        <TabStrip />
        <Toolbar />
        <BookmarkBar />
      </div>
      <div className="flex min-h-0 flex-1">
        <div className="flex min-w-0 flex-1 flex-col">
          <SiteHeader />
          <div className="flex min-h-0 flex-1">
            <CourseDrawer />
            <MainColumn />
            <QuizDrawer />
          </div>
        </div>
        <PageScrollbar />
      </div>
      <div className="shrink-0 font-['Open_Sans',sans-serif] text-sm">
        <Taskbar />
      </div>
    </div>
  );
}
